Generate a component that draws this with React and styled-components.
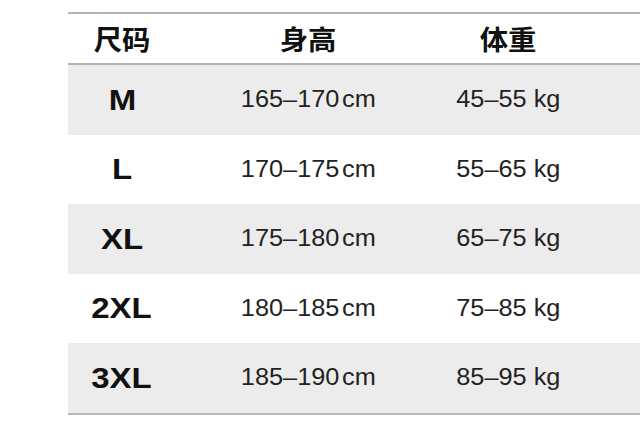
import React from "react";
import styled, { createGlobalStyle } from "styled-components";

const Global = createGlobalStyle`
  html, body { margin: 0; padding: 0; background: #ffffff; }
  body { width: 640px; height: 434px; overflow: hidden; }
`;

const Page = styled.div`
  padding: 12px 0 0 68px;
  width: 572px;
`;

const Table = styled.div`
  display: flex;
  flex-direction: column;
  border-top: 2px solid #b3b3b3;
  border-bottom: 2px solid #b8b8b8;
`;

const cols = "108px 264px 136px 1fr";

const HeaderRow = styled.div`
  display: grid;
  grid-template-columns: ${cols};
  height: 49px;
  align-items: center;
  border-bottom: 2px solid #b3b3b3;
  background: #ffffff;
`;

const Row = styled.div`
  display: grid;
  grid-template-columns: ${cols};
  height: 69.5px;
  align-items: center;
  background: ${(p) => (p.$shaded ? "#ececec" : "#ffffff")};
`;

const Cell = styled.div`
  display: flex;
  justify-content: center;
  align-items: center;
`;

const Text = styled.span`
  display: inline-block;
  transform: scaleX(${(p) => p.$sx || 1.1});
  white-space: pre;
  color: ${(p) => (p.$strong ? "#111111" : "#222222")};
  font-family: ${(p) =>
    p.$cjk
      ? '"Noto Sans CJK SC", "Liberation Sans", sans-serif'
      : '"Liberation Sans", Arial, sans-serif'};
  font-weight: ${(p) => (p.$strong ? 700 : 400)};
  font-size: ${(p) => p.$size}px;
  word-spacing: ${(p) => p.$ws || 0}px;
  line-height: 1;
`;

const rows = [
  { size: "M", h: "165–170 cm", w: "45–55 kg" },
  { size: "L", h: "170–175 cm", w: "55–65 kg" },
  { size: "XL", h: "175–180 cm", w: "65–75 kg" },
  { size: "2XL", h: "180–185 cm", w: "75–85 kg" },
  { size: "3XL", h: "185–190 cm", w: "85–95 kg" },
];

export default function App() {
  return (
    <>
      <Global />
      <Page>
        <Table>
          <HeaderRow>
            <Cell>
              <Text $cjk $strong $size={27} $sx={1.05}>尺码</Text>
            </Cell>
            <Cell>
              <Text $cjk $strong $size={27} $sx={1.05}>身高</Text>
            </Cell>
            <Cell>
              <Text $cjk $strong $size={27} $sx={1.05}>体重</Text>
            </Cell>
            <Cell />
          </HeaderRow>
          {rows.map((r, i) => (
            <Row key={r.size} $shaded={i % 2 === 0}>
              <Cell>
                <Text $strong $size={30} $sx={1.1}>{r.size}</Text>
              </Cell>
              <Cell>
                <Text $size={23} $ws={-4}>{r.h}</Text>
              </Cell>
              <Cell>
                <Text $size={23}>{r.w}</Text>
              </Cell>
              <Cell />
            </Row>
          ))}
        </Table>
      </Page>
    </>
  );
}
